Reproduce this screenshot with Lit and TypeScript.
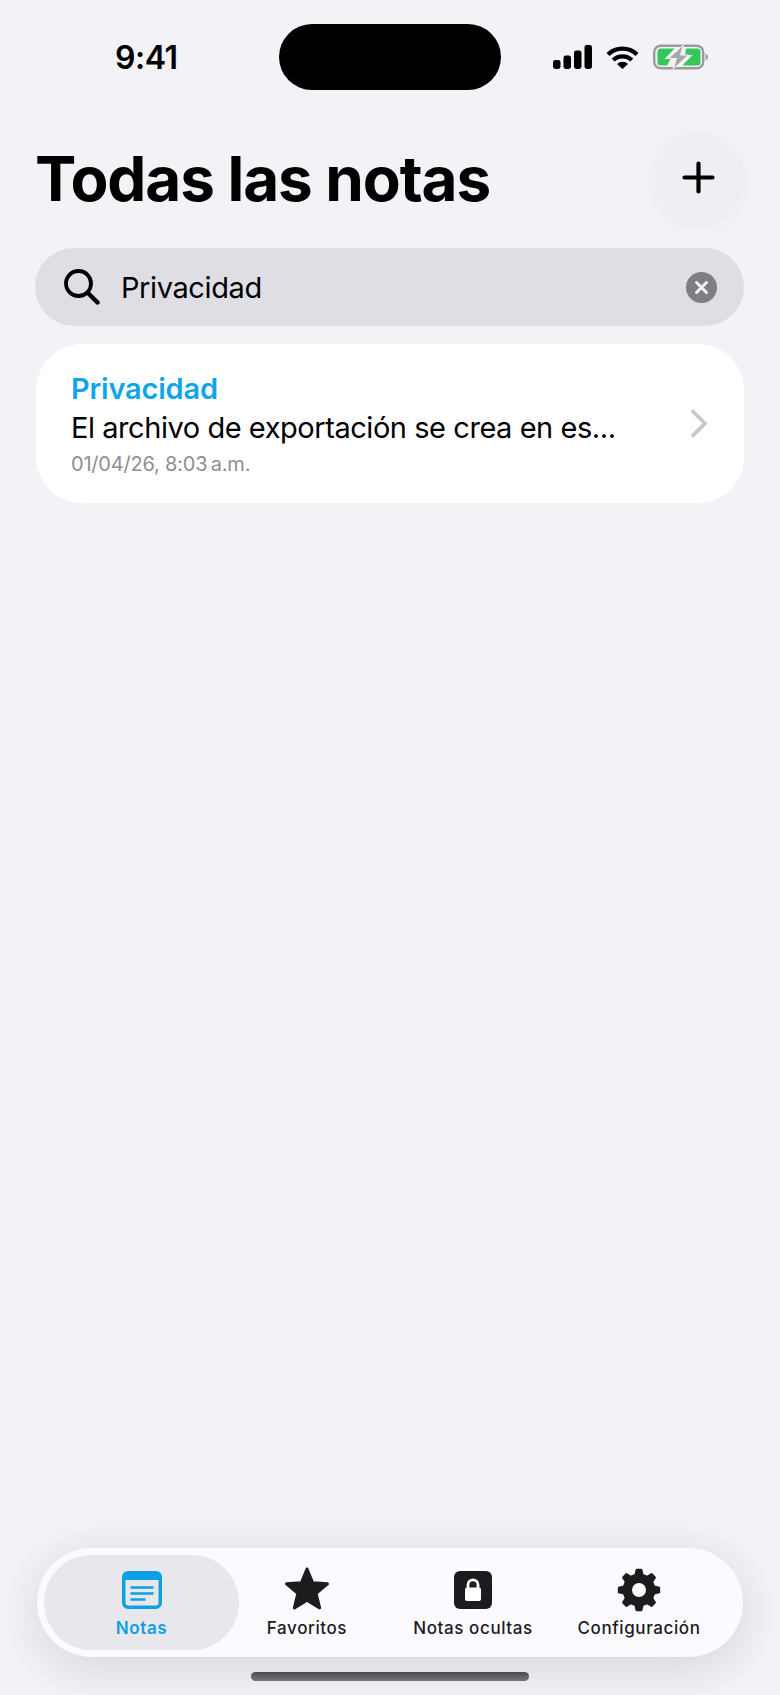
import { html, css, LitElement, svg } from 'lit';
import { customElement } from 'lit/decorators.js';

// 8 tooth gear in a 44x44 box
function gearPath() {
  const pts: string[] = [];
  const teeth = 8;
  for (let i = 0; i < teeth; i++) {
    const a = (i / teeth) * Math.PI * 2 - Math.PI / 2;
    const step = (Math.PI * 2) / teeth;
    const p = (r: number, da: number) =>
      `${(22 + r * Math.cos(a + da * step)).toFixed(2)} ${(22 + r * Math.sin(a + da * step)).toFixed(2)}`;
    pts.push(p(15.5, -0.3), p(20.3, -0.15), p(20.3, 0.15), p(15.5, 0.3));
  }
  return `M${pts.join('L')}Z`;
}

function starPoints() {
  const pts: string[] = [];
  for (let i = 0; i < 10; i++) {
    const r = i % 2 ? 9.6 : 21.5;
    const a = (i / 10) * Math.PI * 2 - Math.PI / 2;
    pts.push(`${(23 + r * Math.cos(a)).toFixed(2)},${(23.5 + r * Math.sin(a)).toFixed(2)}`);
  }
  return pts.join(' ');
}

const tabs = [
  {
    label: 'Notas',
    active: true,
    icon: svg`<svg width="40" height="38" viewBox="0 0 40 38">
      <rect x="1.75" y="1.75" width="36.5" height="34.5" rx="4.5" fill="none" stroke="#0ea0e6" stroke-width="3.5"/>
      <path d="M4 1h32a3 3 0 0 1 3 3v5H1V4a3 3 0 0 1 3-3z" fill="#0ea0e6"/>
      <path d="M8.5 16.5h23M8.5 22.5h23M8.5 28.5h15" stroke="#0ea0e6" stroke-width="2.4" fill="none"/>
    </svg>`,
  },
  {
    label: 'Favoritos',
    icon: svg`<svg width="46" height="46" viewBox="0 0 46 46">
      <polygon points=${starPoints()} fill="#1c1c1e" stroke="#1c1c1e" stroke-width="3" stroke-linejoin="round"/>
    </svg>`,
  },
  {
    label: 'Notas ocultas',
    icon: svg`<svg width="38" height="38" viewBox="0 0 38 38">
      <rect width="38" height="38" rx="6" fill="#1c1c1e"/>
      <path d="M14 18v-4.2a5 5 0 0 1 10 0V18" fill="none" stroke="#fff" stroke-width="2.8"/>
      <rect x="11" y="16.5" width="16" height="13.5" rx="2" fill="#fff"/>
    </svg>`,
  },
  {
    label: 'Configuración',
    icon: svg`<svg width="44" height="44" viewBox="0 0 44 44">
      <path d=${gearPath()} fill="#1c1c1e" stroke="#1c1c1e" stroke-width="2" stroke-linejoin="round"/>
      <circle cx="22" cy="22" r="7" fill="#fbfbff"/>
    </svg>`,
  },
];

@customElement('app-root')
export class AppRoot extends LitElement {
  static styles = css`
    :host {
      display: flex;
      flex-direction: column;
      height: 1695px;
      background: #f2f2f7;
      font-family: Inter, 'Liberation Sans', sans-serif;
      color: #000;
      overflow: hidden;
    }

    .status {
      display: flex;
      align-items: center;
      height: 66px;
      margin-top: 24px;
      padding-left: 115px;
    }
    .time {
      width: 164px;
      font-size: 32px;
      font-weight: 600;
      letter-spacing: -0.5px;
    }
    .island {
      width: 222px;
      height: 66px;
      border-radius: 33px;
      background: #000;
    }
    .status-icons {
      display: flex;
      align-items: center;
      margin-left: 52px;
      gap: 14px;
    }

    .header {
      display: flex;
      align-items: center;
      justify-content: space-between;
      margin-top: 40px;
      padding: 0 36px;
    }
    h1 {
      margin: 0 0 0 -1px;
      padding-top: 3px;
      font-size: 62px;
      line-height: 92px;
      font-weight: 700;
      letter-spacing: -1.1px;
    }
    .add {
      display: flex;
      align-items: center;
      justify-content: center;
      width: 91px;
      height: 91px;
      border-radius: 50%;
      background: #efeff3;
      box-shadow: 0 6px 30px rgba(0, 0, 0, 0.03);
    }

    .search {
      display: flex;
      align-items: center;
      height: 78px;
      margin: 23px 36px 0 35px;
      padding: 0 27px 0 29px;
      border-radius: 39px;
      background: #dedee4;
    }
    .search-text {
      flex: 1;
      margin-left: 21px;
      font-size: 29px;
      letter-spacing: -0.4px;
    }

    .card {
      display: flex;
      align-items: center;
      height: 159px;
      margin: 18px 36px 0;
      padding: 0 37px 0 35px;
      border-radius: 46px;
      background: #fff;
      box-sizing: border-box;
    }
    .card-body {
      flex: 1;
      min-width: 0;
    }
    .card-title {
      font-size: 29px;
      line-height: 36px;
      font-weight: 600;
      letter-spacing: -0.2px;
      color: #0ea5e9;
    }
    .card-text {
      padding-top: 1px;
      font-size: 29px;
      line-height: 40px;
      letter-spacing: -0.45px;
    }
    .card-date {
      margin-top: 3px;
      font-size: 20px;
      line-height: 26px;
      letter-spacing: -0.2px;
      color: #8e8e93;
    }

    .spacer {
      flex: 1;
    }

    .tabbar {
      display: grid;
      grid-template-columns: repeat(4, 166px);
      height: 95px;
      margin: 0 37px;
      padding: 7px 0 7px 21px;
      border-radius: 55px;
      background: #fbfbff;
      box-shadow: 0 10px 50px rgba(0, 0, 0, 0.12);
    }
    .tab {
      display: flex;
      flex-direction: column;
      align-items: center;
      color: #1c1c1e;
      font-size: 17px;
      font-weight: 500;
      letter-spacing: 0.6px;
    }
    .tab.active {
      margin: 0 -15px 0 -14px;
      border-radius: 48px;
      background: #e7e7ec;
      color: #0ea0e6;
      font-weight: 600;
    }
    .icon {
      display: flex;
      align-items: center;
      justify-content: center;
      height: 46px;
      margin-top: 12px;
    }
    .tab span {
      margin-top: 4px;
      line-height: 22px;
    }

    .home {
      width: 278px;
      height: 9px;
      margin: 15px auto 14px;
      border-radius: 5px;
      background: linear-gradient(#4c4c50, #77777b);
    }
  `;

  render() {
    return html`
      <div class="status">
        <div class="time">9:41</div>
        <div class="island"></div>
        <div class="status-icons">
          <svg width="39" height="24" viewBox="0 0 39 24" fill="#000">
            <rect x="0" y="15" width="7.5" height="9" rx="2.4"/>
            <rect x="10.5" y="10.5" width="7.5" height="13.5" rx="2.4"/>
            <rect x="21" y="5.5" width="7.5" height="18.5" rx="2.4"/>
            <rect x="31.5" y="0" width="7.5" height="24" rx="2.4"/>
          </svg>
          <svg width="33" height="23" viewBox="0 0 33 23">
            <path d="M2 8.5a21 21 0 0 1 29 0M7.2 14a13.5 13.5 0 0 1 18.600 0" fill="none" stroke="#000" stroke-width="4.2"/>
            <path d="M11 18a8 8 0 0 1 11 0L16.5 23z" fill="#000"/>
          </svg>
          <svg width="55" height="26" viewBox="0 0 55 26">
            <rect x="1.2" y="1.7" width="49" height="22.6" rx="6.5" fill="none" stroke="#9b9b9f" stroke-width="2.4"/>
            <path d="M52.5 9.5c1.500.5 2.500 2 2.500 3.500s-1 3-2.500 3.500z" fill="#9b9b9f"/>
            <path d="M8 4.500h13.500L11.500 15h6l-3.500 6.500H8A3.500 3.500 0 0 1 4.500 18V8A3.500 3.500 0 0 1 8 4.500z" fill="#34c759"/>
            <path d="M33 4.500h11A3.500 3.500 0 0 1 47.500 8v10a3.500 3.500 0 0 1-3.500 3.500H29.500L39.500 11h-7.500z" fill="#34c759"/>
            <path d="M30.5 0.8 15.5 14.5h8L20 25.200 35.500 11h-8z" fill="#a8a8ac" stroke="#f2f2f7" stroke-width="1"/>
          </svg>
        </div>
      </div>

      <div class="header">
        <h1>Todas las notas</h1>
        <div class="add">
          <svg width="33" height="33" viewBox="0 0 33 33">
            <path d="M16.5 2.5v28M2.5 16.5h28" stroke="#000" stroke-width="4.2" stroke-linecap="round" fill="none"/>
          </svg>
        </div>
      </div>

      <div class="search">
        <svg width="36" height="36" viewBox="0 0 36 36">
          <circle cx="14.5" cy="14.5" r="12.5" fill="none" stroke="#000" stroke-width="3.8"/>
          <path d="M24 24l9.500 9.500" stroke="#000" stroke-width="4.4" stroke-linecap="round"/>
        </svg>
        <div class="search-text">Privacidad</div>
        <svg width="31" height="31" viewBox="0 0 31 31">
          <circle cx="15.5" cy="15.5" r="15.5" fill="#7e7e84"/>
          <path d="M10.5 10.5l10 10M20.5 10.5l-10 10" stroke="#f2f2f7" stroke-width="3" stroke-linecap="round"/>
        </svg>
      </div>

      <div class="card">
        <div class="card-body">
          <div class="card-title">Privacidad</div>
          <div class="card-text">El archivo de exportación se crea en es...</div>
          <div class="card-date">01/04/26, 8:03\u202fa.m.</div>
        </div>
        <svg width="16" height="29" viewBox="0 0 16 29">
          <path d="M2 2.5L14 14.5L2 26.5" fill="none" stroke="#c7c7cc" stroke-width="3.8" stroke-linecap="round" stroke-linejoin="round"/>
        </svg>
      </div>

      <div class="spacer"></div>

      <nav class="tabbar">
        ${tabs.map(
          (t) => html`
            <div class="tab ${t.active ? 'active' : ''}">
              <div class="icon">${t.icon}</div>
              <span>${t.label}</span>
            </div>
          `
        )}
      </nav>
      <div class="home"></div>
    `;
  }
}
